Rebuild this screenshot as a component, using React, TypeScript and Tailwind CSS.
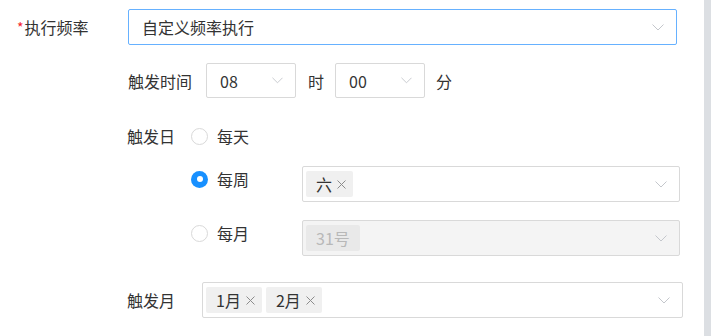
import { useState } from "react";

function Chevron({ className = "" }: { className?: string }) {
  return (
    <svg width="12" height="7" viewBox="0 0 12 7" className={className} fill="none">
      <polyline points="0.5,0.5 6,6 11.5,0.5" stroke="#c4c7cc" strokeWidth="1" />
    </svg>
  );
}

function Close() {
  return (
    <svg width="9" height="9" viewBox="0 0 9 9" fill="none" className="ml-[5px]">
      <path d="M0.5 0.5 L8.5 8.5 M8.5 0.5 L0.5 8.5" stroke="#8c8c8c" strokeWidth="1" />
    </svg>
  );
}

function Tag({ label, disabled = false }: { label: string; disabled?: boolean }) {
  return (
    <span
      className={
        disabled
          ? "flex items-center h-[26px] px-[10px] rounded-[2px] bg-[#e9e9e9] text-[#b8b8b8]"
          : "flex items-center h-[26px] pl-[10px] pr-[7px] rounded-[2px] bg-[#f0f0f0] text-[#333]"
      }
    >
      {label}
      {!disabled && <Close />}
    </span>
  );
}

function Radio({ checked, label }: { checked: boolean; label: string }) {
  return (
    <label className="flex items-center gap-[9px] h-[20px]">
      {checked ? (
        <span className="w-[17px] h-[17px] rounded-full bg-[#1890ff] flex items-center justify-center">
          <span className="w-[6px] h-[6px] rounded-full bg-white" />
        </span>
      ) : (
        <span className="w-[17px] h-[17px] rounded-full border border-[#d9d9d9] bg-white" />
      )}
      <span className="text-[#333]">{label}</span>
    </label>
  );
}

export default function App() {
  const [freq] = useState("自定义频率执行");

  return (
    <div
      className="flex w-[711px] h-[336px] bg-white text-[16px] text-[#333] overflow-hidden"
      style={{ fontFamily: '"Noto Sans CJK SC", "Noto Sans", sans-serif' }}
    >
      <div className="flex-1 flex flex-col">
        {/* 执行频率 */}
        <div className="flex items-center mt-[9px]">
          <div className="w-[128px] pl-[17px] flex items-center">
            <span className="text-[#f5222d] text-[14px] mr-[1px]">*</span>
            <span>执行频率</span>
          </div>
          <div className="w-[549px] h-[36px] border border-[#66b1ff] rounded-[2px] flex items-center justify-between pl-[13px] pr-[12px]">
            <span>{freq}</span>
            <Chevron />
          </div>
        </div>

        {/* 触发时间 */}
        <div className="flex items-center ml-[128px] mt-[18px]">
          <span className="w-[78px]">触发时间</span>
          <div className="w-[90px] h-[35px] border border-[#d9d9d9] rounded-[2px] flex items-center justify-between pl-[13px] pr-[12px]">
            <span>08</span>
            <Chevron className="w-[11px]" />
          </div>
          <span className="ml-[12px] mr-[11px]">时</span>
          <div className="w-[90px] h-[35px] border border-[#d9d9d9] rounded-[2px] flex items-center justify-between pl-[13px] pr-[12px]">
            <span>00</span>
            <Chevron className="w-[11px]" />
          </div>
          <span className="ml-[11px]">分</span>
        </div>

        {/* 触发日 */}
        <div className="flex ml-[127px] mt-[28px]">
          <span className="w-[64px] leading-[20px]">触发日</span>
          <div className="flex flex-col">
            <Radio checked={false} label="每天" />
            <div className="flex items-start mt-[20px]">
              <div className="w-[111px] mt-[3px]">
                <Radio checked={true} label="每周" />
              </div>
              <div className="w-[378px] h-[36px] border border-[#d9d9d9] rounded-[2px] flex items-center justify-between pl-[3px] pr-[12px]">
                <Tag label="六" />
                <Chevron />
              </div>
            </div>
            <div className="flex items-start mt-[18px]">
              <div className="w-[111px] mt-[3px]">
                <Radio checked={false} label="每月" />
              </div>
              <div className="w-[378px] h-[36px] border border-[#d9d9d9] rounded-[2px] bg-[#f4f4f4] flex items-center justify-between pl-[3px] pr-[12px]">
                <Tag label="31号" disabled />
                <Chevron />
              </div>
            </div>
          </div>
        </div>

        {/* 触发月 */}
        <div className="flex items-center ml-[127px] mt-[26px]">
          <span className="w-[75px]">触发月</span>
          <div className="w-[481px] h-[36px] border border-[#d9d9d9] rounded-[2px] flex items-center justify-between pl-[3px] pr-[12px]">
            <div className="flex gap-[4px]">
              <Tag label="1月" />
              <Tag label="2月" />
            </div>
            <Chevron />
          </div>
        </div>
      </div>
      <div className="w-[7px] h-full bg-[#dcdfe3]" />
    </div>
  );
}
